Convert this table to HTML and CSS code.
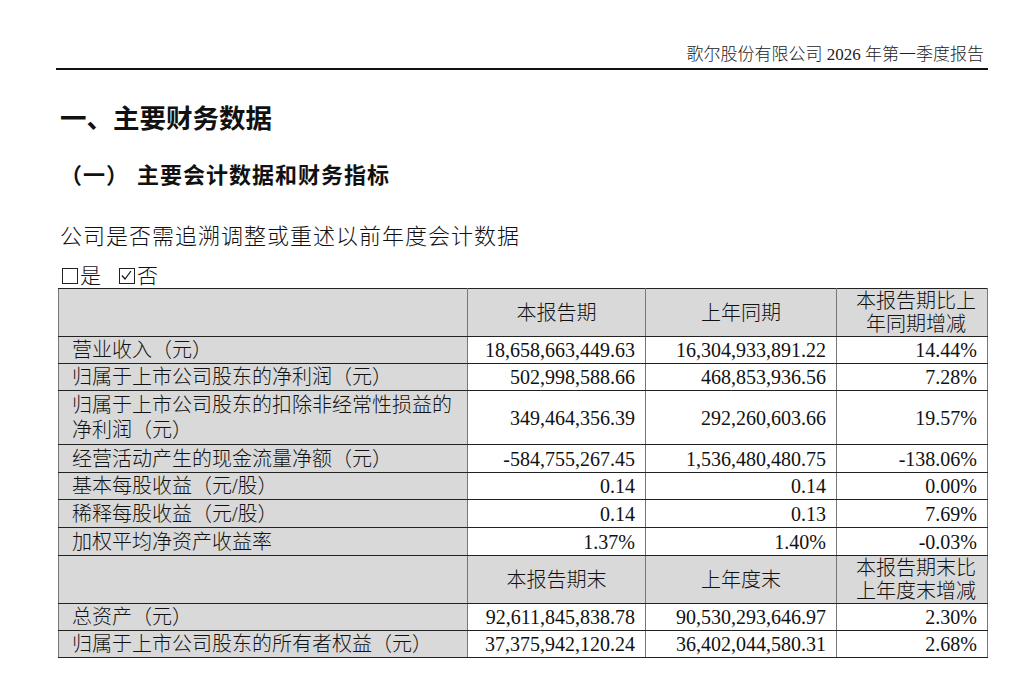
FILE: index.html
```html
<!DOCTYPE html>
<html lang="zh-CN">
<head>
<meta charset="utf-8">
<title>歌尔股份有限公司 2026 年第一季度报告</title>
<link rel="stylesheet" href="styles.css">
</head>
<body>
<div class="page">
  <div class="running-head">歌尔股份有限公司 2026 年第一季度报告</div>
  <h1 class="sec-title">一、主要财务数据</h1>
  <h2 class="sub-title"><span class="paren">（一）</span>主要会计数据和财务指标</h2>
  <p class="question">公司是否需追溯调整或重述以前年度会计数据</p>
  <div class="choices">
    <span class="box"></span><span>是</span>
    <span class="box checked"><svg viewBox="0 0 15 15" width="15" height="15"><path d="M3 7.5 L6 11 L12 3" fill="none" stroke="#111" stroke-width="1.2"/></svg></span><span>否</span>
  </div>
  <table class="fin">
    <colgroup>
      <col class="c1"><col class="c2"><col class="c3"><col class="c4">
    </colgroup>
    <tr class="head h47">
      <td class="lab"></td>
      <td class="hc">本报告期</td>
      <td class="hc">上年同期</td>
      <td class="hc two">本报告期比上<br>年同期增减</td>
    </tr>
    <tr class="h27">
      <td class="lab">营业收入（元）</td>
      <td class="num">18,658,663,449.63</td>
      <td class="num">16,304,933,891.22</td>
      <td class="num">14.44%</td>
    </tr>
    <tr class="h27">
      <td class="lab">归属于上市公司股东的净利润（元）</td>
      <td class="num">502,998,588.66</td>
      <td class="num">468,853,936.56</td>
      <td class="num">7.28%</td>
    </tr>
    <tr class="h54">
      <td class="lab two">归属于上市公司股东的扣除非经常性损益的<br>净利润（元）</td>
      <td class="num">349,464,356.39</td>
      <td class="num">292,260,603.66</td>
      <td class="num">19.57%</td>
    </tr>
    <tr class="h28">
      <td class="lab">经营活动产生的现金流量净额（元）</td>
      <td class="num">-584,755,267.45</td>
      <td class="num">1,536,480,480.75</td>
      <td class="num">-138.06%</td>
    </tr>
    <tr class="h27">
      <td class="lab">基本每股收益（元/股）</td>
      <td class="num">0.14</td>
      <td class="num">0.14</td>
      <td class="num">0.00%</td>
    </tr>
    <tr class="h28">
      <td class="lab">稀释每股收益（元/股）</td>
      <td class="num">0.14</td>
      <td class="num">0.13</td>
      <td class="num">7.69%</td>
    </tr>
    <tr class="h28">
      <td class="lab">加权平均净资产收益率</td>
      <td class="num">1.37%</td>
      <td class="num">1.40%</td>
      <td class="num">-0.03%</td>
    </tr>
    <tr class="head h47">
      <td class="lab"></td>
      <td class="hc">本报告期末</td>
      <td class="hc">上年度末</td>
      <td class="hc two">本报告期末比<br>上年度末增减</td>
    </tr>
    <tr class="h27">
      <td class="lab">总资产（元）</td>
      <td class="num">92,611,845,838.78</td>
      <td class="num">90,530,293,646.97</td>
      <td class="num">2.30%</td>
    </tr>
    <tr class="h27">
      <td class="lab">归属于上市公司股东的所有者权益（元）</td>
      <td class="num">37,375,942,120.24</td>
      <td class="num">36,402,044,580.31</td>
      <td class="num">2.68%</td>
    </tr>
  </table>
</div>
</body>
</html>
```
FILE: styles.css
```css
html, body {
  margin: 0;
  padding: 0;
  background: #ffffff;
}

body {
  font-family: "Liberation Serif", "Noto Sans CJK SC", serif;
  color: #111111;
}

.page {
  width: 1024px;
  height: 676px;
  overflow: hidden;
}

.running-head {
  margin: 0 36px 0 56px;
  padding: 44px 4px 2px 0;
  text-align: right;
  font-size: 17px;
  line-height: 22px;
  font-weight: 300;
  color: #222;
  border-bottom: 2px solid #111;
}

.sec-title {
  margin: 30px 0 0 60px;
  font-family: "Noto Sans CJK SC", sans-serif;
  font-size: 26.5px;
  line-height: 34px;
  font-weight: 700;
}

.sub-title {
  margin: 25px 0 0 60px;
  font-family: "Noto Sans CJK SC", sans-serif;
  font-size: 22px;
  line-height: 28px;
  letter-spacing: 1px;
  font-weight: 700;
}

.sub-title .paren {
  margin-right: 8px;
}

.question {
  margin: 35px 0 0 60px;
  font-size: 22px;
  line-height: 30px;
  letter-spacing: 1px;
  font-weight: 300;
}

.choices {
  margin: 12px 0 0 62px;
  font-size: 21px;
  line-height: 24px;
  font-weight: 300;
  display: flex;
  align-items: center;
}

.box {
  display: inline-block;
  width: 14px;
  height: 14px;
  border: 1px solid #222;
  margin-right: 2px;
  position: relative;
}

.box.checked {
  margin-left: 18px;
}

.box svg {
  position: absolute;
  left: -1px;
  top: -1px;
}

.fin {
  margin-left: 58px;
  width: 929px;
  border-collapse: collapse;
  table-layout: fixed;
  font-size: 20px;
  font-weight: 300;
}

.fin .c1 { width: 409px; }
.fin .c2 { width: 178px; }
.fin .c3 { width: 191px; }
.fin .c4 { width: 151px; }

.fin td {
  border-top: 1px solid #222;
  border-bottom: 1px solid #222;
  border-left: 1px solid #777;
  border-right: 1px solid #777;
  padding: 0;
  line-height: 24px;
  vertical-align: middle;
  white-space: nowrap;
}

.fin tr.h27 { height: 27px; }
.fin tr.h28 { height: 28px; }
.fin tr.h47 { height: 47px; }
.fin tr.h54 { height: 54px; }

.fin .lab {
  background: #d9d9d9;
  padding-left: 13px;
  text-align: left;
}

.fin .lab.two {
  line-height: 25px;
}

.fin .head td {
  background: #d9d9d9;
}

.fin .hc {
  text-align: center;
  padding-top: 1px;
}

.fin .hc.two {
  line-height: 23px;
  padding-left: 8px;
}

.fin .num {
  text-align: right;
  padding-right: 10px;
}
```
